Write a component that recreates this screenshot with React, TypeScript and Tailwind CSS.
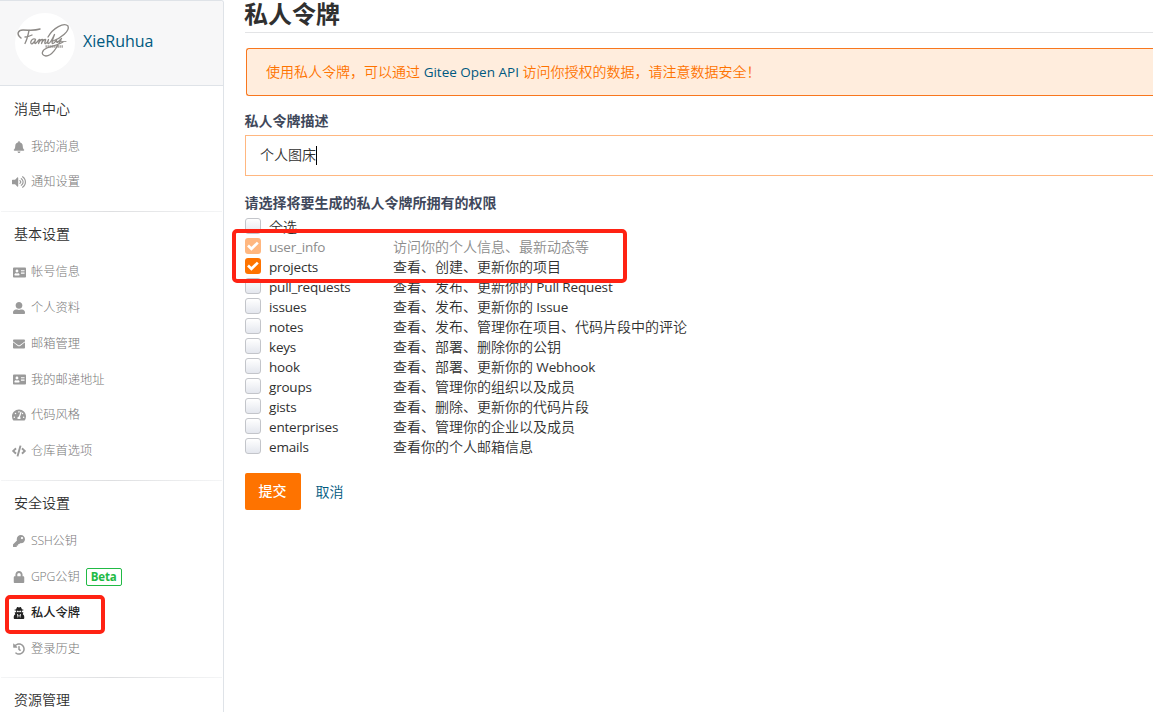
import React from "react";
import {
  FaBell,
  FaVolumeUp,
  FaAddressCard,
  FaUserAlt,
  FaEnvelope,
  FaTachometerAlt,
  FaCode,
  FaKey,
  FaLock,
  FaUserSecret,
  FaHistory,
} from "react-icons/fa";
import type { IconType } from "react-icons";

type Item = { icon: IconType; label: string; latin?: string; beta?: boolean; active?: boolean; size?: string };
type Group = { title: string; items: Item[] };

const groups: Group[] = [
  {
    title: "消息中心",
    items: [
      { icon: FaBell, label: "我的消息" },
      { icon: FaVolumeUp, label: "通知设置", size: "size-[14px]" },
    ],
  },
  {
    title: "基本设置",
    items: [
      { icon: FaAddressCard, label: "帐号信息", size: "size-[13px]" },
      { icon: FaUserAlt, label: "个人资料" },
      { icon: FaEnvelope, label: "邮箱管理" },
      { icon: FaAddressCard, label: "我的邮递地址", size: "size-[13px]" },
      { icon: FaTachometerAlt, label: "代码风格", size: "size-[14px]" },
      { icon: FaCode, label: "仓库首选项", size: "size-[14px]" },
    ],
  },
  {
    title: "安全设置",
    items: [
      { icon: FaKey, latin: "SSH", label: "公钥" },
      { icon: FaLock, latin: "GPG", label: "公钥", beta: true },
      { icon: FaUserSecret, label: "私人令牌", active: true },
      { icon: FaHistory, label: "登录历史" },
    ],
  },
  { title: "资源管理", items: [] },
];

type Scope = { name: string; text: string; latin?: string; state?: "on" | "locked" };

const scopes: Scope[] = [
  { name: "user_info", text: "访问你的个人信息、最新动态等", state: "locked" },
  { name: "projects", text: "查看、创建、更新你的项目", state: "on" },
  { name: "pull_requests", text: "查看、发布、更新你的", latin: "Pull Request" },
  { name: "issues", text: "查看、发布、更新你的", latin: "Issue" },
  { name: "notes", text: "查看、发布、管理你在项目、代码片段中的评论" },
  { name: "keys", text: "查看、部署、删除你的公钥" },
  { name: "hook", text: "查看、部署、更新你的", latin: "Webhook" },
  { name: "groups", text: "查看、管理你的组织以及成员" },
  { name: "gists", text: "查看、删除、更新你的代码片段" },
  { name: "enterprises", text: "查看、管理你的企业以及成员" },
  { name: "emails", text: "查看你的个人邮箱信息" },
];

function Avatar() {
  return (
    <svg className="size-[60px] shrink-0 rounded-full bg-white" viewBox="0 0 60 60" fill="none" stroke="#8d8a87" strokeLinecap="round" strokeLinejoin="round">
      <path d="M6 25C1 21 3 17 8 17c7 0 11 1 17-1" strokeWidth="1.5" />
      <path d="M14 17.500c-1 5-2 9-4 13M10 24c3 0 5-1 7-2" strokeWidth="1.3" />
      <path d="M20 26c-3-1-5 3-4 4.500s4-2 4.500-4c-1 3-1 4 0 4 2-1 3-4 4-4s-1 3-1 4c1-3 3-4 4-4s-1 3-1 4c1-3 3-4 4-4s-2 4 0 4 2-2 3-4c-1 3-1 4 0 4 2 0 4-5 6-9-2 5-3 9-2 9s3-2 4-4c0 3 0 3 1 3l4-4" strokeWidth="1.300" />
      <path d="M33 24C38 15 49 9 53 13c2 5-7 12-15 15M46 27c-4 7-9 16-15 16-6-1-4-6 1-8 5-2 11-3 16-6" strokeWidth="1.3" />
      <path d="M30.500 33.500h18" strokeWidth="2.400" strokeDasharray="1.4 0.6" strokeLinecap="butt" opacity="0.8" />
      <path d="M41 28.500h10" strokeWidth="0.8" />
    </svg>
  );
}

function SideRow({ item }: { item: Item }) {
  const Icon = item.icon;
  return (
    <li className={item.active ? "flex h-[35.85px] items-center text-[#222]" : "flex h-[35.85px] items-center text-[#9a9a9a]"}>
      <span className="flex w-[14px] shrink-0 justify-center">
        <Icon className={item.size ?? "size-[12px]"} />
      </span>
      <span className={item.active ? "ml-[5px] text-[12.25px] font-medium text-[#222]" : "ml-[5px] text-[12.25px] font-light text-[#777]"}>
        {item.latin && <span className="text-[12.2px] tracking-[-0.2px]">{item.latin}</span>}
        {item.label}
      </span>
      {item.beta && (
        <span className="ml-[6px] flex h-[18px] w-[36px] items-center justify-center rounded-[2px] border border-[#21ba45] text-[11.5px] font-bold tracking-[-0.2px] text-[#21ba45]">
          Beta
        </span>
      )}
    </li>
  );
}

function CheckBox({ state }: { state?: Scope["state"] }) {
  if (state) {
    return (
      <span className={state === "on" ? "mb-[2px] flex size-4 items-center justify-center rounded-[3px] bg-[#fe7300]" : "mb-[2px] flex size-4 items-center justify-center rounded-[3px] bg-[#ffb780]"}>
        <svg className="size-4" viewBox="0 0 16 16" fill="none" stroke="white" strokeWidth="2.700">
          <path d="M3 7.600 6.400 10.800 12.800 4.600" />
        </svg>
      </span>
    );
  }
  return <span className="mb-[2px] size-4 rounded-[3px] border border-[#c3c5ca] bg-linear-to-b from-white to-[#e4e7ee]" />;
}

export default function App() {
  return (
    <div className="relative flex h-[712px] w-full overflow-hidden bg-white font-['Open_Sans','Noto_Sans_CJK_SC',sans-serif] text-[14px] leading-5 font-[350] text-[#40485b]">
      <aside className="w-[224px] shrink-0 overflow-hidden rounded-tr-[3px] border-t border-r border-[#dfe3e8]">
        <div className="flex h-[85px] items-center border-b border-[#dfe3e8] bg-[#f7f7f8] pl-[15px]">
          <Avatar />
          <span className="mb-[4px] ml-[8px] text-[16px] font-normal text-[#005980]">XieRuhua</span>
        </div>
        {groups.map((g) => (
          <section key={g.title}>
            <h3 className="flex h-[42.6px] items-center pt-[2.500px] pl-[14px] font-[350] text-[#303030]">{g.title}</h3>
            <ul className="pl-[12px]">
              {g.items.map((it) => (
                <SideRow key={it.label + it.latin} item={it} />
              ))}
            </ul>
            <div className="mx-px mt-[10.3px] h-px bg-linear-to-r from-[#f4f5f6] via-[#dedfe1] to-[#f4f5f6]" />
          </section>
        ))}
      </aside>

      <main className="min-w-0 flex-1 pl-[21px]">
        <h1 className="-ml-px h-[33px] text-[24px] leading-[28px] font-bold text-[#303030]">私人令牌</h1>
        <div className="-mt-px h-px bg-[#e3e4e6]" />
        <div className="mt-[15px] ml-px flex h-[48px] items-center rounded-l-[3px] border border-r-0 border-[#f8771e] bg-[#ffeddd] pl-[19px] text-[#fe7300]">
          <p>
            使用私人令牌，可以通过 <span className="text-[13.5px] font-normal text-[#005980]">Gitee Open API</span> 访问你授权的数据，请注意数据安全！
          </p>
        </div>
        <label className="mt-[15px] -ml-[0.5px] block font-bold">私人令牌描述</label>
        <div className="mt-[4px] flex h-[41px] items-center border border-r-0 border-[#ffb780] pl-[14px] text-[#303030]">
          <span className="mb-[2px]">个人图床</span>
          <span className="h-[19px] w-px bg-black" />
        </div>
        <p className="mt-[17px] -ml-[0.5px] font-bold">请选择将要生成的私人令牌所拥有的权限</p>
        <div className="mt-[4px] flex h-5 items-center text-[#303030]">
          <CheckBox />
          <span className="ml-[8px]">全选</span>
        </div>
        {scopes.map((s) => (
          <div key={s.name} className={s.state === "locked" ? "flex h-5 items-center text-[#8c8c8c]" : "flex h-5 items-center text-[#303030]"}>
            <CheckBox state={s.state} />
            <span className="ml-[8px] w-[124px] text-[13.5px] font-normal tracking-[-0.2px]">{s.name}</span>
            <span>
              {s.text}
              {s.latin && <span className="text-[13.5px] font-normal tracking-[-0.15px]"> {s.latin}</span>}
            </span>
          </div>
        ))}
        <div className="mt-[16px] flex items-center">
          <button className="h-[37px] w-[56px] rounded-[2px] bg-[#fe7300] pr-px pb-px font-medium text-white">提交</button>
          <a className="ml-[14.500px] text-[#005980]">取消</a>
        </div>
      </main>

      <div className="absolute top-[229px] left-[232px] h-[54px] w-[395px] rounded-[5px] border-4 border-[#ff2213]" />
      <div className="absolute top-[595px] left-[5px] h-[39px] w-[100px] rounded-[5px] border-4 border-[#ff2213]" />
    </div>
  );
}
